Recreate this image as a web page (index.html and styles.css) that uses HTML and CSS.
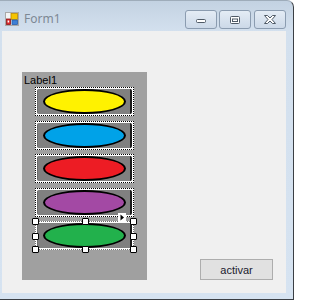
FILE: index.html
```html
<!DOCTYPE html>
<html>
<head>
    <title>Form1</title>
    <link rel="stylesheet" href="styles.css">
</head>
<body>
    <div class="window">
        <!-- Title bar -->
        <div class="title-bar">
            <div class="title-left">
                <svg class="app-icon" width="14" height="14" viewBox="0 0 14 14">
                    <rect x="0.5" y="0.5" width="13" height="13" fill="#f4f4f4" stroke="#a9a9a9"/>
                    <rect x="6" y="1.5" width="6.5" height="6" fill="#f5c400" stroke="#b88a00" stroke-width="0.8"/>
                    <rect x="7" y="8" width="5.5" height="4.5" fill="#3c7fd6" stroke="#245aa6" stroke-width="0.8"/>
                    <rect x="1.5" y="7" width="4" height="5.5" fill="#d8262a" stroke="#8b1417" stroke-width="0.8"/>
                    <rect x="2.6" y="8.5" width="1.6" height="2" fill="#ffffff"/>
                </svg>
                <span class="title-text">Form1</span>
            </div>
            <div class="caption-buttons">
                <div class="cap-btn">
                    <svg width="12" height="8" viewBox="0 0 12 8">
                        <rect x="1.5" y="3.5" width="9" height="3" rx="1" fill="#fff" stroke="#4f5a66"/>
                    </svg>
                </div>
                <div class="cap-btn">
                    <svg width="12" height="10" viewBox="0 0 12 10">
                        <rect x="1.5" y="1.5" width="9" height="7" rx="1" fill="#fff" stroke="#4f5a66"/>
                        <rect x="3.5" y="4" width="5" height="2.5" fill="#fff" stroke="#4f5a66"/>
                    </svg>
                </div>
                <div class="cap-btn cap-close">
                    <svg width="14" height="11" viewBox="0 0 14 11">
                        <path d="M1.5 1.5 H4.5 L7 4 L9.5 1.5 H12.5 L9 5.5 L12.5 9.5 H9.5 L7 7 L4.5 9.5 H1.5 L5 5.5 Z" fill="#fff" stroke="#4f5a66" stroke-linejoin="round"/>
                    </svg>
                </div>
            </div>
        </div>

        <!-- Client area -->
        <div class="client">
            <div class="panel">
                <div class="label">Label1</div>
                <div class="rows">
                    <div class="ctrl"><div class="face"><div class="oval yellow"></div></div></div>
                    <div class="ctrl"><div class="face"><div class="oval blue"></div></div></div>
                    <div class="ctrl"><div class="face"><div class="oval red"></div></div></div>
                    <div class="ctrl"><div class="face"><div class="oval purple"></div></div></div>
                    <div class="ctrl selected">
                        <div class="face"><div class="oval green"></div></div>
                        <div class="sel-frame"></div>
                        <span class="handle h-tl"></span>
                        <span class="handle h-tm"></span>
                        <span class="handle h-tr"></span>
                        <span class="handle h-ml"></span>
                        <span class="handle h-mr"></span>
                        <span class="handle h-bl"></span>
                        <span class="handle h-bm"></span>
                        <span class="handle h-br"></span>
                        <span class="smart-tag">
                            <svg width="8" height="9" viewBox="0 0 8 9">
                                <path d="M2.5 1.5 L6 4.5 L2.5 7.5 Z" fill="#000"/>
                            </svg>
                        </span>
                    </div>
                </div>
            </div>
            <button class="action-btn">activar</button>
        </div>
    </div>
</body>
</html>
```

FILE: styles.css
```css
* {
    margin: 0;
    padding: 0;
    box-sizing: border-box;
}

body {
    background: #ffffff;
    font-family: 'Liberation Sans', Arial, sans-serif;
}

/* Window frame */
.window {
    width: 294px;
    height: 300px;
    border-right: 1px solid #3b3f44;
    border-bottom: 1px solid #3b3f44;
    border-top: 1px solid #9eacba;
    border-top-right-radius: 7px;
    padding: 0 7px 6px 2px;
    display: flex;
    flex-direction: column;
    background: linear-gradient(#c3d2e2 0, #d3e0ee 30px, #d6e3f1 100%);
}

.title-bar {
    height: 30px;
    display: flex;
    justify-content: space-between;
    align-items: flex-start;
}

.title-left {
    display: flex;
    align-items: center;
    gap: 5px;
    padding: 11px 0 0 3px;
}

.title-text {
    font-family: 'Noto Sans', 'Open Sans', sans-serif;
    font-size: 12px;
    color: #7d8894;
    line-height: 14px;
}

.caption-buttons {
    display: flex;
    gap: 2px;
    padding-top: 9px;
}

.cap-btn {
    width: 32px;
    height: 19px;
    border: 1px solid #8b9cb0;
    border-radius: 3px;
    background: linear-gradient(#e4ecf5, #ccd9e8);
    display: flex;
    justify-content: center;
    align-items: center;
}

.cap-close {
    margin-left: 1px;
}

/* Client area */
.client {
    flex: 1;
    background: #f0f0f0;
    display: flex;
    align-items: flex-end;
    padding: 0 0 13px 20px;
}

.panel {
    width: 125px;
    height: 208px;
    background: #a0a0a0;
}

.label {
    font-size: 11px;
    line-height: 13px;
    color: #000;
    padding: 2px 0 0 2px;
}

.rows {
    display: flex;
    flex-direction: column;
    gap: 4.5px;
    margin: 0 0 0 13px;
}

.ctrl {
    position: relative;
    width: 99px;
    height: 29px;
    background: #ffffff;
    border: 1px dotted #000;
    padding: 1px;
}

.face {
    width: 100%;
    height: 100%;
    background: #808080;
    border-radius: 2px;
    border-right: 2px solid #1a1a1a;
    border-left: 1px solid #6a6a6a;
    display: flex;
    justify-content: center;
    align-items: center;
}

.oval {
    width: 83px;
    height: 25px;
    border: 2px solid #000;
    border-radius: 50%;
}

.yellow { background: #fff200; }
.blue { background: #00a2e8; }
.red { background: #ed1c24; }
.purple { background: #a349a4; }
.green { background: #22b14c; }

/* Designer selection */
.sel-frame {
    position: absolute;
    left: -1px;
    top: -1px;
    right: -1px;
    bottom: -1px;
    border: 1px dotted #6e6e6e;
}

.handle {
    position: absolute;
    width: 7px;
    height: 7px;
    background: #fff;
    border: 1px solid #000;
    border-radius: 1px;
}

.h-tl { left: -4px; top: -4px; }
.h-tm { left: 46px; top: -4px; }
.h-tr { right: -4px; top: -4px; }
.h-ml { left: -4px; top: 11px; }
.h-mr { right: -4px; top: 11px; }
.h-bl { left: -4px; bottom: -4px; }
.h-bm { left: 46px; bottom: -4px; }
.h-br { right: -4px; bottom: -4px; }

.smart-tag {
    position: absolute;
    right: 7px;
    top: -9px;
    width: 8px;
    height: 9px;
    background: #fff;
    display: flex;
}

.action-btn {
    width: 73px;
    height: 21px;
    margin: 0 0 0 53px;
    background: #e1e1e1;
    border: 1px solid #adadad;
    font-family: 'Liberation Sans', Arial, sans-serif;
    font-size: 11px;
    color: #1a1a2e;
}
```
